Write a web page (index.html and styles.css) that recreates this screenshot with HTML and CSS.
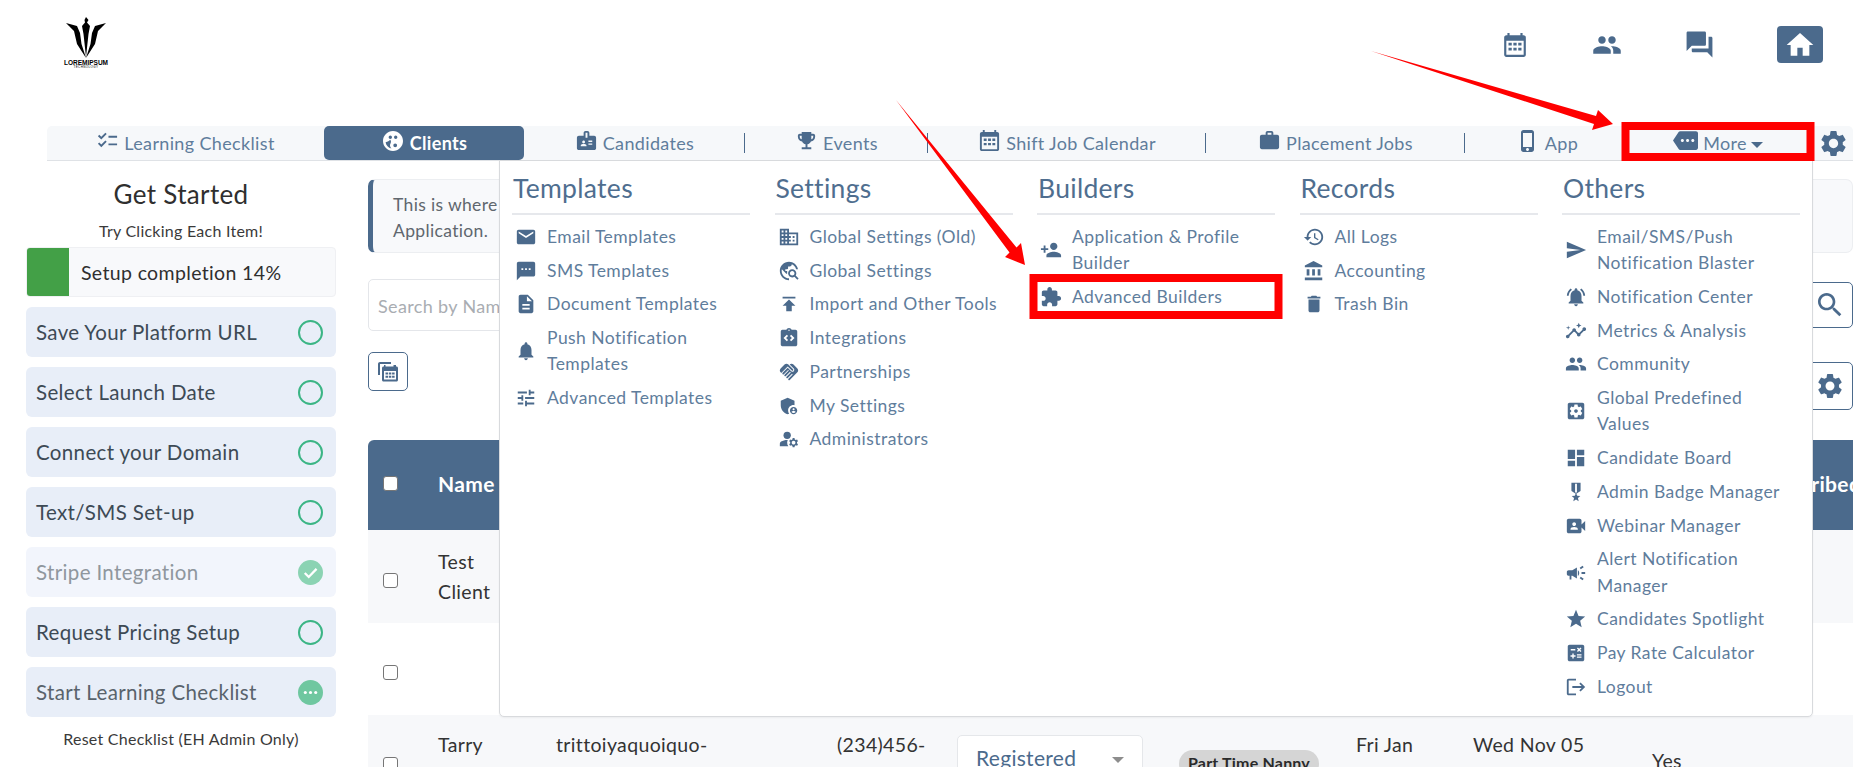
FILE: index.html
```html
<!DOCTYPE html>
<html lang="en">
<head>
<meta charset="utf-8">
<title>Clients</title>
<link rel="stylesheet" href="styles.css">
</head>
<body>
<div class="page">
<svg class="sprite" xmlns="http://www.w3.org/2000/svg">
<symbol id="i-cal" viewBox="0 0 24 24"><path d="M20 3h-1V1h-2v2H7V1H5v2H4c-1.1 0-2 .9-2 2v16c0 1.1.9 2 2 2h16c1.1 0 2-.9 2-2V5c0-1.1-.9-2-2-2zm0 18H4V8h16v13zM6 10h3v2.5H6zm4.5 0h3v2.5h-3zm4.5 0h3v2.5h-3zM6 14.5h3V17H6zm4.5 0h3V17h-3zm4.5 0h3V17h-3z"/></symbol>
<symbol id="i-people" viewBox="0 0 24 24"><path d="M16 11c1.66 0 2.99-1.34 2.99-3S17.66 5 16 5c-1.66 0-3 1.34-3 3s1.34 3 3 3zm-8 0c1.66 0 2.99-1.34 2.99-3S9.66 5 8 5C6.34 5 5 6.34 5 8s1.34 3 3 3zm0 2c-2.33 0-7 1.17-7 3.5V19h14v-2.5c0-2.33-4.67-3.5-7-3.5zm8 0c-.29 0-.62.02-.97.05 1.16.84 1.97 1.97 1.97 3.45V19h6v-2.5c0-2.33-4.67-3.5-7-3.5z"/></symbol>
<symbol id="i-forum" viewBox="0 0 24 24"><path d="M21 6h-2v9H6v2c0 .55.45 1 1 1h11l4 4V7c0-.55-.45-1-1-1zm-4 6V3c0-.55-.45-1-1-1H3c-.55 0-1 .45-1 1v14l4-4h10c.55 0 1-.45 1-1z"/></symbol>
<symbol id="i-home" viewBox="0 0 24 24"><path d="M10 20v-6h4v6h5v-8h3L12 3 2 12h3v8z"/></symbol>
<symbol id="i-check" viewBox="0 0 24 24"><path d="M22 7h-9v2h9V7zm0 8h-9v2h9v-2zM5.54 11L2 7.46l1.41-1.41 2.12 2.12 4.24-4.24 1.41 1.41L5.54 11zm0 8L2 15.46l1.41-1.41 2.12 2.12 4.24-4.24 1.41 1.41L5.54 19z"/></symbol>
<symbol id="i-face" viewBox="0 0 24 24"><path fill-rule="evenodd" d="M12 2C6.48 2 2 6.48 2 12s4.48 10 10 10 10-4.48 10-10S17.52 2 12 2zM9.300 6.600a1.700 1.700 0 1 1 0 3.400 1.700 1.700 0 0 1 0-3.400zm5.400 0a1.700 1.700 0 1 1 0 3.400 1.700 1.700 0 0 1 0-3.400zM4.600 13.200c2.200-.5 3.600-1.300 4.600-2.400.9 1 1.100 2.500.2 3.900-.8 1.200-.4 3.300 1 4.700-3-.5-5.400-3-5.800-6.200zm9.600 1.200a1.900 1.900 0 1 1 0 3.800 1.900 1.900 0 0 1 0-3.800z"/></symbol>
<symbol id="i-badge" viewBox="0 0 24 24"><path d="M20 7h-5V4c0-1.1-.9-2-2-2h-2c-1.1 0-2 .9-2 2v3H4c-1.1 0-2 .9-2 2v11c0 1.1.9 2 2 2h16c1.1 0 2-.9 2-2V9c0-1.1-.9-2-2-2zM9 12c.83 0 1.5.67 1.5 1.5S9.83 15 9 15s-1.5-.67-1.5-1.5S8.17 12 9 12zm3 6H6v-.75c0-1 2-1.5 3-1.5s3 .5 3 1.5V18zm1-9h-2V4h2v5zm5 7.5h-4V15h4v1.5zm0-3h-4V12h4v1.5z"/></symbol>
<symbol id="i-trophy" viewBox="0 0 24 24"><path d="M19 5h-2V3H7v2H5c-1.1 0-2 .9-2 2v1c0 2.55 1.92 4.63 4.39 4.94.63 1.5 1.98 2.63 3.61 2.96V19H7v2h10v-2h-4v-3.1c1.63-.33 2.98-1.46 3.61-2.96C19.08 12.63 21 10.55 21 8V7c0-1.1-.9-2-2-2zM5 8V7h2v3.82C5.84 10.4 5 9.3 5 8zm14 0c0 1.3-.84 2.4-2 2.82V7h2v1z"/></symbol>
<symbol id="i-work" viewBox="0 0 24 24"><path d="M20 6h-4V4c0-1.11-.89-2-2-2h-4c-1.11 0-2 .89-2 2v2H4c-1.11 0-1.99.89-1.99 2L2 19c0 1.11.89 2 2 2h16c1.11 0 2-.89 2-2V8c0-1.11-.89-2-2-2zm-6 0h-4V4h4v2z"/></symbol>
<symbol id="i-phone" viewBox="0 0 24 24"><path d="M15.5 1h-8C6.12 1 5 2.12 5 3.5v17C5 21.88 6.12 23 7.5 23h8c1.38 0 2.5-1.12 2.5-2.5v-17C18 2.12 16.88 1 15.5 1zm-4 21c-.83 0-1.5-.67-1.5-1.5s.67-1.5 1.5-1.5 1.5.67 1.5 1.5-.67 1.5-1.5 1.5zm4.5-4H7V4h9v14z"/></symbol>
<symbol id="i-more" viewBox="0 0 24 24"><path d="M22 3H7c-.69 0-1.23.35-1.59.88L0 12l5.41 8.11c.36.53.9.89 1.59.89h15c1.1 0 2-.9 2-2V5c0-1.1-.9-2-2-2zM9 13.5c-.83 0-1.5-.67-1.5-1.5s.67-1.5 1.5-1.5 1.5.67 1.5 1.5-.67 1.5-1.5 1.5zm5 0c-.83 0-1.5-.67-1.5-1.5s.67-1.5 1.5-1.5 1.5.67 1.5 1.5-.67 1.5-1.5 1.5zm5 0c-.83 0-1.5-.67-1.5-1.5s.67-1.5 1.5-1.5 1.5.67 1.5 1.5-.67 1.5-1.5 1.5z"/></symbol>
<symbol id="i-gear" viewBox="0 0 24 24"><path d="M19.14 12.94c.04-.3.06-.61.06-.94 0-.32-.02-.64-.07-.94l2.03-1.58c.18-.14.23-.41.12-.61l-1.92-3.32c-.12-.22-.37-.29-.59-.22l-2.39.96c-.5-.38-1.03-.7-1.62-.94l-.36-2.54c-.04-.24-.24-.41-.48-.41h-3.84c-.24 0-.43.17-.47.41l-.36 2.54c-.59.24-1.13.57-1.62.94l-2.39-.96c-.22-.08-.47 0-.59.22L2.74 8.87c-.12.21-.08.47.12.61l2.03 1.58c-.05.3-.09.63-.09.94s.02.64.07.94l-2.03 1.58c-.18.14-.23.41-.12.61l1.92 3.32c.12.22.37.29.59.22l2.39-.96c.5.38 1.03.7 1.62.94l.36 2.54c.05.24.24.41.48.41h3.84c.24 0 .44-.17.47-.41l.36-2.54c.59-.24 1.13-.56 1.62-.94l2.39.96c.22.08.47 0 .59-.22l1.92-3.32c.12-.22.07-.47-.12-.61l-2.01-1.58zM12 15.6c-1.98 0-3.6-1.62-3.6-3.6s1.62-3.6 3.6-3.6 3.6 1.62 3.6 3.6-1.62 3.6-3.6 3.6z"/></symbol>
<symbol id="i-email" viewBox="0 0 24 24"><path d="M20 4H4c-1.1 0-1.99.9-1.99 2L2 18c0 1.1.9 2 2 2h16c1.1 0 2-.9 2-2V6c0-1.1-.9-2-2-2zm0 4l-8 5-8-5V6l8 5 8-5v2z"/></symbol>
<symbol id="i-sms" viewBox="0 0 24 24"><path d="M20 2H4c-1.1 0-1.99.9-1.99 2L2 22l4-4h14c1.1 0 2-.9 2-2V4c0-1.1-.9-2-2-2zM9 11H7V9h2v2zm4 0h-2V9h2v2zm4 0h-2V9h2v2z"/></symbol>
<symbol id="i-doc" viewBox="0 0 24 24"><path d="M14 2H6c-1.1 0-1.99.9-1.99 2L4 20c0 1.1.89 2 1.99 2H18c1.1 0 2-.9 2-2V8l-6-6zm2 16H8v-2h8v2zm0-4H8v-2h8v2zm-3-5V3.5L18.5 9H13z"/></symbol>
<symbol id="i-bell" viewBox="0 0 24 24"><path d="M12 22c1.1 0 2-.9 2-2h-4c0 1.1.89 2 2 2zm6-6v-5c0-3.07-1.64-5.64-4.5-6.32V4c0-.83-.67-1.5-1.5-1.5s-1.5.67-1.5 1.5v.68C7.63 5.36 6 7.92 6 11v5l-2 2v1h16v-1l-2-2z"/></symbol>
<symbol id="i-tune" viewBox="0 0 24 24"><path d="M3 17v2h6v-2H3zM3 5v2h10V5H3zm10 16v-2h8v-2h-8v-2h-2v6h2zM7 9v2H3v2h4v2h2V9H7zm14 4v-2H11v2h10zm-6-4h2V7h4V5h-4V3h-2v6z"/></symbol>
<symbol id="i-domain" viewBox="0 0 24 24"><path d="M12 7V3H2v18h20V7H12zM6 19H4v-2h2v2zm0-4H4v-2h2v2zm0-4H4V9h2v2zm0-4H4V5h2v2zm4 12H8v-2h2v2zm0-4H8v-2h2v2zm0-4H8V9h2v2zm0-4H8V5h2v2zm10 12h-8v-2h2v-2h-2v-2h2v-2h-2V9h8v10zm-2-8h-2v2h2v-2zm0 4h-2v2h2v-2z"/></symbol>
<symbol id="i-explore" viewBox="0 0 24 24"><path d="M19.3 16.9c.4-.7.7-1.5.7-2.4 0-2.5-2-4.5-4.5-4.5S11 12 11 14.5s2 4.5 4.5 4.5c.9 0 1.7-.3 2.4-.7l3.2 3.2 1.4-1.4-3.2-3.2zm-3.8.1c-1.4 0-2.5-1.1-2.5-2.5s1.1-2.5 2.5-2.5 2.5 1.1 2.5 2.5-1.1 2.5-2.5 2.5zM12 20v2C6.48 22 2 17.52 2 12S6.48 2 12 2c4.84 0 8.87 3.44 9.8 8h-2.07c-.64-2.46-2.4-4.47-4.73-5.41V5c0 1.1-.9 2-2 2h-2v2c0 .55-.45 1-1 1H8v2h2v3H9l-4.79-4.79C4.08 10.79 4 11.38 4 12c0 4.41 3.59 8 8 8z"/></symbol>
<symbol id="i-publish" viewBox="0 0 24 24"><path d="M5 4v2h14V4H5zm0 10h4v6h6v-6h4l-7-7-7 7z"/></symbol>
<symbol id="i-integ" viewBox="0 0 24 24"><path d="M19 3h-4.18C14.4 1.84 13.3 1 12 1c-1.3 0-2.4.84-2.82 2H5c-.14 0-.27.01-.4.04-.39.08-.74.28-1.01.55-.18.18-.33.4-.43.64-.1.23-.16.49-.16.77v14c0 .27.06.54.16.78s.25.45.43.64c.27.27.62.47 1.01.55.13.02.26.03.4.03h14c1.1 0 2-.9 2-2V5c0-1.1-.9-2-2-2zM11 14.17l-1.41 1.42L6 12l3.59-3.59L11 9.83 8.83 12 11 14.17zm1-9.92c-.41 0-.75-.34-.75-.75s.34-.75.75-.75.75.34.75.75-.34.75-.75.75zm2.41 11.34L13 14.17 15.17 12 13 9.83l1.41-1.42L18 12l-3.59 3.59z"/></symbol>
<symbol id="i-hand" viewBox="0 0 24 24"><path d="M16.48 10.41c-.39.39-1.04.39-1.43 0l-4.47-4.46-7.05 7.04-.66-.63c-1.17-1.17-1.17-3.07 0-4.24l4.24-4.24c1.17-1.17 3.07-1.17 4.24 0L16.48 9c.39.39.39 1.02 0 1.41zm.7-2.12c.78.78.78 2.05 0 2.83-1.27 1.27-2.61.22-2.83 0l-3.76-3.76-5.57 5.57c-.39.39-.39 1.02 0 1.41.39.39 1.02.39 1.42 0l4.62-4.62.71.71-4.62 4.62c-.39.39-.39 1.02 0 1.41.39.39 1.02.39 1.42 0l4.62-4.62.71.71-4.62 4.62c-.39.39-.39 1.02 0 1.41.39.39 1.02.39 1.41 0l4.62-4.62.71.71-4.62 4.62c-.39.39-.39 1.02 0 1.41.39.39 1.02.39 1.41 0l8.32-8.34c1.17-1.17 1.17-3.07 0-4.24l-4.24-4.24c-1.15-1.15-3.01-1.17-4.18-.06l4.48 4.47z"/></symbol>
<symbol id="i-shield" viewBox="0 0 24 24"><path d="M17 11c.34 0 .67.04 1 .09V6.27L10.5 3 3 6.27v4.91c0 4.54 3.2 8.79 7.5 9.82.55-.13 1.08-.32 1.6-.55-.69-.98-1.1-2.17-1.1-3.45 0-3.31 2.69-6 6-6z"/><path d="M17 13c-2.21 0-4 1.79-4 4s1.79 4 4 4 4-1.79 4-4-1.79-4-4-4zm0 1.38c.62 0 1.12.51 1.12 1.12s-.51 1.12-1.12 1.12-1.12-.51-1.12-1.12.5-1.12 1.12-1.12zm0 5.37c-.93 0-1.74-.46-2.24-1.17.05-.72 1.51-1.08 2.24-1.08s2.19.36 2.24 1.08c-.5.71-1.31 1.17-2.24 1.17z"/></symbol>
<symbol id="i-manage" viewBox="0 0 24 24"><circle cx="10" cy="8" r="4"/><path d="M10.67 13.02c-.22-.01-.44-.02-.67-.02-2.42 0-4.68.67-6.61 1.82-.88.52-1.39 1.5-1.39 2.53V20h9.26c-.79-1.13-1.26-2.51-1.26-4 0-1.07.25-2.07.67-2.98z"/><path d="M20.75 16c0-.22-.03-.42-.06-.63l1.14-1.01-1-1.73-1.45.49c-.32-.27-.68-.48-1.08-.63L18 11h-2l-.3 1.49c-.4.15-.76.36-1.08.63l-1.45-.49-1 1.73 1.14 1.01c-.03.21-.06.41-.06.63s.03.42.06.63l-1.14 1.01 1 1.73 1.45-.49c.32.27.68.48 1.08.63L16 21h2l.3-1.49c.4-.15.76-.36 1.08-.63l1.45.49 1-1.73-1.14-1.01c.03-.21.06-.41.06-.63zM17 18c-1.1 0-2-.9-2-2s.9-2 2-2 2 .9 2 2-.9 2-2 2z"/></symbol>
<symbol id="i-padd" viewBox="0 0 24 24"><path d="M15 12c2.21 0 4-1.79 4-4s-1.79-4-4-4-4 1.79-4 4 1.79 4 4 4zm-9-2V7H4v3H1v2h3v3h2v-3h3v-2H6zm9 4c-2.67 0-8 1.34-8 4v2h16v-2c0-2.66-5.33-4-8-4z"/></symbol>
<symbol id="i-ext" viewBox="0 0 24 24"><path d="M20.5 11H19V7c0-1.1-.9-2-2-2h-4V3.5C13 2.12 11.88 1 10.5 1S8 2.12 8 3.5V5H4c-1.1 0-1.99.9-1.99 2v3.8H3.5c1.49 0 2.7 1.21 2.7 2.7s-1.21 2.7-2.7 2.7H2V20c0 1.1.9 2 2 2h3.8v-1.5c0-1.49 1.21-2.7 2.7-2.7 1.49 0 2.7 1.21 2.7 2.7V22H17c1.1 0 2-.9 2-2v-4h1.5c1.38 0 2.5-1.12 2.5-2.5S21.88 11 20.5 11z"/></symbol>
<symbol id="i-history" viewBox="0 0 24 24"><path d="M13 3c-4.97 0-9 4.03-9 9H1l3.89 3.89.07.14L9 12H6c0-3.87 3.13-7 7-7s7 3.13 7 7-3.13 7-7 7c-1.93 0-3.68-.79-4.94-2.06l-1.42 1.42C8.27 19.99 10.51 21 13 21c4.97 0 9-4.03 9-9s-4.03-9-9-9zm-1 5v5l4.28 2.54.72-1.21-3.5-2.08V8H12z"/></symbol>
<symbol id="i-bank" viewBox="0 0 24 24"><path d="M4 10v7h3v-7H4zm6 0v7h3v-7h-3zM2 22h19v-3H2v3zm14-12v7h3v-7h-3zm-4.5-9L2 6v2h19V6l-9.5-5z"/></symbol>
<symbol id="i-trash" viewBox="0 0 24 24"><path d="M6 19c0 1.1.9 2 2 2h8c1.1 0 2-.9 2-2V7H6v12zM19 4h-3.5l-1-1h-5l-1 1H5v2h14V4z"/></symbol>
<symbol id="i-send" viewBox="0 0 24 24"><path d="M2.01 21L23 12 2.01 3 2 10l15 2-15 2z"/></symbol>
<symbol id="i-bella" viewBox="0 0 24 24"><path d="M7.58 4.08L6.15 2.65C3.75 4.48 2.17 7.3 2.03 10.5h2c.15-2.65 1.51-4.97 3.55-6.42zm12.39 6.42h2c-.15-3.2-1.73-6.02-4.12-7.85l-1.42 1.43c2.02 1.45 3.39 3.77 3.54 6.42zM18 11c0-3.07-1.64-5.64-4.5-6.32V4c0-.83-.67-1.5-1.5-1.5s-1.5.67-1.5 1.5v.68C7.63 5.36 6 7.92 6 11v5l-2 2v1h16v-1l-2-2v-5zm-6 11c.14 0 .27-.01.4-.04.65-.14 1.18-.58 1.44-1.18.1-.24.15-.5.15-.78h-4c.01 1.1.9 2 2.01 2z"/></symbol>
<symbol id="i-insights" viewBox="0 0 24 24"><path d="M21 8c-1.45 0-2.26 1.44-1.93 2.51l-3.55 3.56c-.3-.09-.74-.09-1.04 0l-2.55-2.55C12.27 10.45 11.46 9 10 9c-1.45 0-2.27 1.44-1.93 2.52l-4.56 4.55C2.44 15.74 1 16.55 1 18c0 1.1.9 2 2 2 1.45 0 2.26-1.44 1.93-2.51l4.55-4.56c.3.09.74.09 1.04 0l2.55 2.55C12.73 16.55 13.54 18 15 18c1.45 0 2.27-1.44 1.93-2.52l3.56-3.55c1.07.33 2.51-.48 2.51-1.93 0-1.1-.9-2-2-2z"/><path d="M15 9l.94-2.07L18 6l-2.06-.93L15 3l-.92 2.07L12 6l2.08.93zM3.5 11L4 9l2-.5L4 8l-.5-2L3 8l-2 .5L3 9z"/></symbol>
<symbol id="i-sapps" viewBox="0 0 24 24"><path d="M12 10c-1.1 0-2 .9-2 2s.9 2 2 2 2-.9 2-2-.9-2-2-2zm7-7H5c-1.11 0-2 .9-2 2v14c0 1.1.89 2 2 2h14c1.11 0 2-.9 2-2V5c0-1.1-.89-2-2-2zm-1.75 9c0 .23-.02.46-.05.68l1.48 1.16c.13.11.17.3.08.45l-1.4 2.42c-.09.15-.27.21-.43.15l-1.74-.7c-.36.28-.76.51-1.18.69l-.26 1.85c-.03.17-.18.3-.35.3h-2.8c-.17 0-.32-.13-.35-.29l-.26-1.85c-.43-.18-.82-.41-1.18-.69l-1.74.7c-.16.06-.34 0-.43-.15l-1.4-2.42c-.09-.15-.05-.34.08-.45l1.48-1.16c-.03-.23-.05-.46-.05-.69 0-.23.02-.46.05-.68l-1.48-1.16c-.13-.11-.17-.3-.08-.45l1.4-2.42c.09-.15.27-.21.43-.15l1.74.7c.36-.28.76-.51 1.18-.69l.26-1.85c.03-.17.18-.3.35-.3h2.8c.17 0 .32.13.35.29l.26 1.85c.43.18.82.41 1.18.69l1.74-.7c.16-.06.34 0 .43.15l1.4 2.42c.09.15.05.34-.08.45l-1.48 1.16c.03.23.05.46.05.69z"/></symbol>
<symbol id="i-dash" viewBox="0 0 24 24"><path d="M3 13h8V3H3v10zm0 8h8v-6H3v6zm10 0h8V11h-8v10zm0-18v6h8V3h-8z"/></symbol>
<symbol id="i-medal" viewBox="0 0 24 24"><path d="M17 10.43V2H7v8.43c0 .35.18.68.49.86l4.18 2.51-.99 2.34-3.41.29 2.59 2.24L9.07 22 12 20.23 14.93 22l-.78-3.33 2.59-2.24-3.41-.29-.99-2.34 4.18-2.51c.3-.18.48-.5.48-.86zm-4 1.8l-1 .6-1-.6V3h2v9.23z"/></symbol>
<symbol id="i-video" viewBox="0 0 24 24"><path d="M18 10.48V6c0-1.1-.9-2-2-2H4c-1.1 0-2 .9-2 2v12c0 1.1.9 2 2 2h12c1.1 0 2-.9 2-2v-4.48l4 3.98v-11l-4 3.98zM10 8c1.1 0 2 .9 2 2s-.9 2-2 2-2-.9-2-2 .9-2 2-2zm4 8H6v-.57c0-.81.48-1.53 1.22-1.85.85-.37 1.79-.58 2.78-.58.99 0 1.93.21 2.78.58.74.32 1.22 1.04 1.22 1.85V16z"/></symbol>
<symbol id="i-camp" viewBox="0 0 24 24"><path d="M18 11v2h4v-2h-4zm-2 6.61c.96.71 2.21 1.65 3.2 2.39.4-.53.8-1.07 1.2-1.6-.99-.74-2.24-1.68-3.2-2.4-.4.54-.8 1.08-1.2 1.61zM20.4 5.6c-.4-.53-.8-1.07-1.2-1.6-.99.74-2.24 1.68-3.2 2.4.4.53.8 1.07 1.2 1.6.96-.72 2.21-1.65 3.2-2.4zM4 9c-1.1 0-2 .9-2 2v2c0 1.1.9 2 2 2h1v4h2v-4h1l5 3V6L8 9H4zm11.5 3c0-1.33-.58-2.53-1.5-3.35v6.69c.92-.81 1.5-2.01 1.5-3.34z"/></symbol>
<symbol id="i-star" viewBox="0 0 24 24"><path d="M12 17.27L18.18 21l-1.64-7.03L22 9.24l-7.19-.61L12 2 9.19 8.63 2 9.24l5.46 4.73L5.82 21z"/></symbol>
<symbol id="i-calc" viewBox="0 0 24 24"><path d="M19 3H5c-1.1 0-2 .9-2 2v14c0 1.1.9 2 2 2h14c1.1 0 2-.9 2-2V5c0-1.1-.9-2-2-2zm-5.97 4.06L14.09 6l1.41 1.41L16.91 6l1.06 1.06-1.41 1.41 1.41 1.41-1.06 1.06-1.41-1.4-1.41 1.41-1.06-1.06 1.41-1.41-1.41-1.42zm-6.78.66h5v1.5h-5v-1.5zM11.5 16h-2v2H8v-2H6v-1.5h2v-2h1.5v2h2V16zm6.5 1.25h-5v-1.5h5v1.5zm0-2.5h-5v-1.5h5v1.5z"/></symbol>
<symbol id="i-logout" viewBox="0 0 24 24"><path d="M17 7l-1.41 1.41L18.17 11H8v2h10.17l-2.58 2.58L17 17l5-5zM4 5h8V3H4c-1.1 0-2 .9-2 2v14c0 1.1.9 2 2 2h8v-2H4V5z"/></symbol>
<symbol id="i-search" viewBox="0 0 24 24"><path d="M15.5 14h-.79l-.28-.27C15.41 12.59 16 11.11 16 9.5 16 5.91 13.09 3 9.5 3S3 5.91 3 9.5 5.91 16 9.5 16c1.61 0 3.09-.59 4.23-1.57l.27.28v.79l5 4.99L20.49 19l-4.99-5zm-6 0C7.01 14 5 11.99 5 9.5S7.01 5 9.5 5 14 7.01 14 9.5 11.99 14 9.5 14z"/></symbol>
<symbol id="i-copycal" viewBox="0 0 24 24"><path d="M2 4c0-1.1.9-2 2-2h11v2H4v11H2V4z"/><path d="M19 5h1v1.5h.5c.8 0 1.5.7 1.5 1.5v12c0 .8-.7 1.5-1.5 1.5h-13C6.700 21.500 6 20.800 6 20V8c0-.8.7-1.500 1.500-1.500H8V5h1.500v1.500h8V5zM8 11v8.500h12V11H8zm1.500 1.500h2.500v2H9.500zm3.300 0h2.500v2h-2.500zm3.300 0h2.500v2h-2.500zm-6.600 3.200h2.500v2H9.500zm3.300 0h2.500v2h-2.500zm3.300 0h2.500v2h-2.500z"/></symbol>
</svg>

<header class="top">
  <div class="logo">
    <svg class="logo-mark" viewBox="0 0 42 42" xmlns="http://www.w3.org/2000/svg"><path d="M21 0l2.500 3-1.500 2.500 3 3.500-1.500 8-2.500 23-2.500-23-1.500-8 3-3.500L19.500 3zM1 6l11 3 3 7 1.500 11 4.500 14-9-14-3-13-5-5zM41 6l-11 3-3 7-1.500 11L21 41l9-14 3-13 5-5z"/></svg>
    <span class="logo-name">LOREMIPSUM</span>
    <span class="logo-sub">TECHNOLOGY</span>
  </div>
  <div class="top-icons">
    <svg class="ic-top ic-26"><use href="#i-cal"/></svg>
    <svg class="ic-top ic-30"><use href="#i-people"/></svg>
    <svg class="ic-top ic-31"><use href="#i-forum"/></svg>
    <span class="home-btn"><svg class="ic-home"><use href="#i-home"/></svg></span>
  </div>
</header>

<nav class="nav">
  <a class="ni"><svg class="ic-nav"><use href="#i-check"/></svg>Learning Checklist</a>
  <a class="ni active"><svg class="ic-nav"><use href="#i-face"/></svg>Clients</a>
  <a class="ni sep"><svg class="ic-nav"><use href="#i-badge"/></svg>Candidates</a>
  <a class="ni sep"><svg class="ic-nav"><use href="#i-trophy"/></svg>Events</a>
  <a class="ni sep"><svg class="ic-nav"><use href="#i-cal"/></svg>Shift Job Calendar</a>
  <a class="ni sep"><svg class="ic-nav"><use href="#i-work"/></svg>Placement Jobs</a>
  <a class="ni"><svg class="ic-nav ic-tall"><use href="#i-phone"/></svg>App</a>
  <a class="ni"><svg class="ic-nav ic-wide"><use href="#i-more"/></svg>More<span class="caret"></span></a>
  <a class="ni-gear"><svg class="ic-gear"><use href="#i-gear"/></svg></a>
</nav>

<div class="content">
  <aside class="side">
    <h2 class="side-title">Get Started</h2>
    <p class="side-sub">Try Clicking Each Item!</p>
    <div class="progress"><span class="progress-fill"></span><span class="progress-label">Setup completion 14%</span></div>
    <ul class="steps">
      <li class="step">Save Your Platform URL<span class="ring"></span></li>
      <li class="step">Select Launch Date<span class="ring"></span></li>
      <li class="step">Connect your Domain<span class="ring"></span></li>
      <li class="step">Text/SMS Set-up<span class="ring"></span></li>
      <li class="step done">Stripe Integration<svg class="state" viewBox="0 0 24 24"><circle cx="12" cy="12" r="12" fill="#8bd3b3"/><path d="M6.500 12.500l3.800 3.800 7.500-7.800" fill="none" stroke="#fff" stroke-width="2.200"/></svg></li>
      <li class="step">Request Pricing Setup<span class="ring"></span></li>
      <li class="step pending">Start Learning Checklist<svg class="state" viewBox="0 0 24 24"><circle cx="12" cy="12" r="12" fill="#6fc7a0"/><circle cx="7" cy="12" r="1.500" fill="#fff"/><circle cx="12" cy="12" r="1.500" fill="#fff"/><circle cx="17" cy="12" r="1.500" fill="#fff"/></svg></li>
    </ul>
    <p class="reset">Reset Checklist (EH Admin Only)</p>
  </aside>

  <main class="main">
    <div class="alert">This is where<br>Application.</div>
    <div class="search-row">
      <div class="search-input">Search by Name</div>
      <span class="icon-btn search-btn"><svg class="ic-search"><use href="#i-search"/></svg></span>
    </div>
    <div class="tool-row">
      <span class="icon-btn calc-btn"><svg class="ic-calc"><use href="#i-copycal"/></svg></span>
      <span class="icon-btn gear-btn"><svg class="ic-btn"><use href="#i-gear"/></svg></span>
    </div>
    <div class="table-wrap">
      <table class="grid">
        <colgroup><col class="c1"><col class="c2"><col class="c3"><col class="c4"><col class="c5"><col class="c6"><col class="c7"><col class="c8"><col class="c9"><col class="c10"></colgroup>
        <thead><tr>
          <th><span class="cb cb-head"></span></th><th class="th-label">Name</th><th></th><th></th><th></th><th></th><th></th><th></th><th></th><th class="th-label">Subscribed</th>
        </tr></thead>
        <tbody>
          <tr class="odd first"><td><span class="cb"></span></td><td class="t">Test<br>Client</td><td></td><td></td><td></td><td></td><td></td><td></td><td></td><td></td></tr>
          <tr><td><span class="cb"></span></td><td></td><td></td><td></td><td></td><td></td><td></td><td></td><td></td><td></td></tr>
          <tr class="odd">
            <td><span class="cb"></span></td><td class="t">Tarry</td><td class="t">trittoiyaquoiquo-</td><td class="t">(234)456-</td>
            <td class="cell-status"><div class="status">Registered<span class="status-arrow"></span></div></td>
            <td class="cell-tag"><span class="tag">Part Time Nanny</span></td>
            <td class="t">Fri Jan</td><td class="t">Wed Nov 05</td><td>Yes</td><td></td>
          </tr>
        </tbody>
      </table>
    </div>
  </main>
</div>

<section class="mega">
  <div class="mcol">
    <h3 class="mh">Templates</h3>
    <a class="mi"><svg class="mic"><use href="#i-email"/></svg><span>Email Templates</span></a>
    <a class="mi"><svg class="mic"><use href="#i-sms"/></svg><span>SMS Templates</span></a>
    <a class="mi"><svg class="mic"><use href="#i-doc"/></svg><span>Document Templates</span></a>
    <a class="mi"><svg class="mic"><use href="#i-bell"/></svg><span>Push Notification<br>Templates</span></a>
    <a class="mi"><svg class="mic"><use href="#i-tune"/></svg><span>Advanced Templates</span></a>
  </div>
  <div class="mcol">
    <h3 class="mh">Settings</h3>
    <a class="mi"><svg class="mic"><use href="#i-domain"/></svg><span>Global Settings (Old)</span></a>
    <a class="mi"><svg class="mic"><use href="#i-explore"/></svg><span>Global Settings</span></a>
    <a class="mi"><svg class="mic"><use href="#i-publish"/></svg><span>Import and Other Tools</span></a>
    <a class="mi"><svg class="mic"><use href="#i-integ"/></svg><span>Integrations</span></a>
    <a class="mi"><svg class="mic"><use href="#i-hand"/></svg><span>Partnerships</span></a>
    <a class="mi"><svg class="mic"><use href="#i-shield"/></svg><span>My Settings</span></a>
    <a class="mi"><svg class="mic"><use href="#i-manage"/></svg><span>Administrators</span></a>
  </div>
  <div class="mcol">
    <h3 class="mh">Builders</h3>
    <a class="mi"><svg class="mic"><use href="#i-padd"/></svg><span>Application &amp; Profile<br>Builder</span></a>
    <a class="mi"><svg class="mic"><use href="#i-ext"/></svg><span>Advanced Builders</span></a>
  </div>
  <div class="mcol">
    <h3 class="mh">Records</h3>
    <a class="mi"><svg class="mic"><use href="#i-history"/></svg><span>All Logs</span></a>
    <a class="mi"><svg class="mic"><use href="#i-bank"/></svg><span>Accounting</span></a>
    <a class="mi"><svg class="mic"><use href="#i-trash"/></svg><span>Trash Bin</span></a>
  </div>
  <div class="mcol">
    <h3 class="mh">Others</h3>
    <a class="mi"><svg class="mic"><use href="#i-send"/></svg><span>Email/SMS/Push<br>Notification Blaster</span></a>
    <a class="mi"><svg class="mic"><use href="#i-bella"/></svg><span>Notification Center</span></a>
    <a class="mi"><svg class="mic"><use href="#i-insights"/></svg><span>Metrics &amp; Analysis</span></a>
    <a class="mi"><svg class="mic"><use href="#i-people"/></svg><span>Community</span></a>
    <a class="mi"><svg class="mic"><use href="#i-sapps"/></svg><span>Global Predefined<br>Values</span></a>
    <a class="mi"><svg class="mic"><use href="#i-dash"/></svg><span>Candidate Board</span></a>
    <a class="mi"><svg class="mic"><use href="#i-medal"/></svg><span>Admin Badge Manager</span></a>
    <a class="mi"><svg class="mic"><use href="#i-video"/></svg><span>Webinar Manager</span></a>
    <a class="mi"><svg class="mic"><use href="#i-camp"/></svg><span>Alert Notification<br>Manager</span></a>
    <a class="mi"><svg class="mic"><use href="#i-star"/></svg><span>Candidates Spotlight</span></a>
    <a class="mi"><svg class="mic"><use href="#i-calc"/></svg><span>Pay Rate Calculator</span></a>
    <a class="mi"><svg class="mic"><use href="#i-logout"/></svg><span>Logout</span></a>
  </div>
</section>

<svg class="annot" viewBox="0 0 1872 767" xmlns="http://www.w3.org/2000/svg">
  <path class="a-fill" d="M1371 51L1596 116 1598 110 1613 124 1592 130 1594 124z"/>
  <path class="a-fill" d="M896 100L1016.500 247.500 1021 243 1025 265 1005 257 1009.500 252.500z"/>
  <path class="a-box" d="M1625.500 126h185v31h-185z"/>
  <path class="a-box" d="M1033.500 278h245v37h-245z"/>
</svg>
</div>
</body>
</html>
```

FILE: styles.css
```css
* { box-sizing: border-box; }
html, body { margin: 0; padding: 0; height: 767px; overflow: hidden; }
body {
  background: #fff;
  color: #3a3a3a;
  font-family: "Lato", "Open Sans", sans-serif;
  font-size: 20.500px;
  letter-spacing: .35px;
}
.page { position: relative; width: 1872px; height: 767px; overflow: hidden; }
.sprite { position: absolute; width: 0; height: 0; }
a { color: inherit; text-decoration: none; }
h2, h3, p, ul { margin: 0; padding: 0; font-weight: 400; }
ul { list-style: none; }
svg { fill: currentColor; }

/* header */
.top { height: 126px; display: flex; justify-content: space-between; padding: 17px 49px 0 64px; }
.logo { width: 44px; display: flex; flex-direction: column; align-items: center; color: #000; }
.logo-mark { width: 42px; height: 42px; display: block; }
.logo-name { font-family: "Liberation Sans", sans-serif; font-weight: 700; font-size: 6.500px; line-height: 6px; letter-spacing: 0; margin-top: 1px; }
.logo-sub { font-family: "Liberation Sans", sans-serif; font-size: 3px; line-height: 3px; letter-spacing: .4px; }
.top-icons { display: flex; align-items: center; height: 37px; margin-top: 9px; color: #4b6a8c; }
.ic-top { display: block; flex: none; }
.ic-26 { width: 26px; height: 26px; margin-right: 64px; }
.ic-30 { width: 30px; height: 30px; margin-right: 62px; }
.ic-31 { width: 31px; height: 31px; margin-right: 62px; }
.home-btn { width: 46px; height: 37px; border-radius: 4px; background: #4b6a8c; color: #fff; display: flex; align-items: center; justify-content: center; }
.ic-home { width: 32px; height: 32px; }

/* nav */
.nav {
  margin-left: 47px;
  width: 1806px;
  height: 35px;
  display: grid;
  grid-template-columns: 277px 200px 221px 183px 278px 259px 164px 178px 46px;
  background: #f6f8fa;
  border-bottom: 1px solid #dfe2e6;
  border-radius: 5px 5px 0 0;
  color: #5f7d9c;
  font-size: 18px;
}
.ni { position: relative; height: 34px; display: flex; align-items: center; justify-content: center; gap: 5px; }
.ni.sep::after { content: ""; position: absolute; right: 0; top: 7px; width: 1px; height: 20px; background: #4b6a8c; }
.ni.active { background: #4b6a8c; color: #fff; font-weight: 700; border-radius: 5px; height: 34px; }
.ic-nav { width: 23px; height: 23px; color: #4b6a8c; margin-top: -5px; flex: none; }
.ni.active .ic-nav { color: #fff; width: 24px; height: 24px; }
.ic-tall { width: 24px; height: 24px; }
.ic-wide { width: 25px; height: 25px; }
.caret { width: 0; height: 0; margin-left: -1px; border: 6px solid transparent; border-top: 6px solid #4b6a8c; border-bottom: 0; margin-top: 3px; }
.ni-gear { display: flex; align-items: center; justify-content: center; color: #4b6a8c; }
.ic-gear { width: 31px; height: 31px; margin-left: 6px; }

/* content */
.content { display: grid; grid-template-columns: 310px 1485px; column-gap: 32px; margin-left: 26px; }
.side-title { margin-top: 18px; font-size: 26px; line-height: 30px; text-align: center; color: #2f2f2f; }
.side-sub { margin-top: 11px; font-size: 16px; line-height: 22px; text-align: center; letter-spacing: .25px; }
.progress { margin-top: 5px; height: 50px; display: flex; align-items: center; background: #f8f9fb; border: 1px solid #eff0f3; border-radius: 4px; overflow: hidden; font-size: 19.500px; }
.progress-fill { width: 43px; height: 50px; background: #43a047; flex: none; margin-left: -1px; }
.progress-label { margin-left: 12px; color: #2f2f2f; }
.steps { margin-top: 10px; display: flex; flex-direction: column; gap: 10px; }
.step { height: 50px; display: flex; align-items: center; justify-content: space-between; padding: 0 13px 0 10px; border-radius: 6px; background: #e8eef8; color: #3d4a55; }
.step.done { background: #f2f5fc; color: #8f979e; }
.step.pending { color: #59636c; }
.ring { width: 25px; height: 25px; border-radius: 50%; border: 2.500px solid #3bb585; }
.state { width: 25px; height: 25px; }
.reset { margin-top: 12px; font-size: 16px; line-height: 20px; text-align: center; letter-spacing: .25px; }

.alert { margin-top: 18px; height: 74px; padding: 12px 20px; background: #f8f9fb; border: 1px solid #eceef1; border-left: 5px solid #4b6a8c; border-radius: 7px; color: #60676e; font-size: 17.500px; line-height: 26px; }
.search-row { margin-top: 26px; display: flex; align-items: center; height: 52px; }
.search-input { flex: 1; height: 52px; padding: 0 9px; line-height: 52px; border: 1px solid #e4e6ea; border-radius: 5px; color: #a9adb2; font-size: 18px; }
.icon-btn { display: flex; align-items: center; justify-content: center; border: 1.500px solid #4b6a8c; border-radius: 5px; color: #4b6a8c; background: #fff; }
.search-btn { width: 46px; height: 46px; margin-left: -1px; }
.tool-row { margin-top: 21px; display: flex; justify-content: space-between; align-items: flex-start; }
.calc-btn { width: 40px; height: 39px; }
.gear-btn { width: 46px; height: 48px; margin-top: 10px; }
.ic-btn { width: 30px; height: 30px; }
.ic-search { width: 32px; height: 32px; }
.ic-calc { width: 24px; height: 24px; }

.table-wrap { margin-top: 30px; width: 1485px; overflow: hidden; border-radius: 6px 0 0 0; }
.grid { width: 1485px; table-layout: fixed; border-collapse: collapse; font-size: 19.500px; line-height: 30px; color: #333; }
.c1 { width: 54px; } .c2 { width: 118px; } .c3 { width: 281px; } .c4 { width: 121px; } .c5 { width: 223px; }
.c6 { width: 175px; } .c7 { width: 117px; } .c8 { width: 179px; } .c9 { width: 103px; } .c10 { width: 114px; }
.grid th { height: 90px; padding: 0 16px; background: #4b6a8c; color: #fff; font-size: 21px; font-weight: 700; text-align: left; white-space: nowrap; overflow: hidden; }
.grid th.th-label { padding-bottom: 2px; }
.grid td { height: 92px; padding: 16px; vertical-align: middle; white-space: nowrap; }
.grid td.t { vertical-align: top; padding-top: 15px; }
.first td.t { padding-top: 17px; }
.odd td { background: #f7f8fa; }
.cb { display: block; width: 15px; height: 15px; border: 1.500px solid #767676; border-radius: 3px; background: #fff; }
.cb-head { margin-bottom: 4px; }
.grid td .cb { margin-top: 7px; }
.grid th:first-child, .grid td:first-child { padding: 0 0 0 15px; }
.grid td.cell-status { padding: 20px 0 0 15px; vertical-align: top; }
.grid td.cell-tag { padding: 35px 0 0 14px; vertical-align: top; }
.status { width: 186px; height: 50px; padding: 0 18px 4px; display: flex; align-items: center; justify-content: space-between; background: #fff; border: 1px solid #e5e7ea; border-radius: 5px; color: #4b6a8c; font-size: 21px; letter-spacing: .3px; }
.status-arrow { width: 0; height: 0; border: 6px solid transparent; border-top: 6px solid #8d8d8d; border-bottom: 0; margin-top: 4px; }
.tag { display: block; height: 28px; width: 140px; text-align: center; line-height: 26px; border-radius: 14px; background: #d5d5d5; color: #2a2a2a; font-size: 16px; font-weight: 700; letter-spacing: .2px; }

/* mega menu */
.mega {
  position: absolute;
  left: 499px;
  top: 160px;
  width: 1314px;
  height: 557px;
  padding: 12px 12px 0;
  display: grid;
  grid-template-columns: repeat(5, 238px);
  column-gap: 24.500px;
  background: #fff;
  border: 1px solid #d8dadd;
  border-radius: 0 0 5px 5px;
  box-shadow: 0 1px 2px rgba(0,0,0,.05);
  color: #5f7d9c;
  letter-spacing: .45px;
}
.mcol { display: block; }
.mh { height: 42px; margin-bottom: 5px; padding-left: 1px; border-bottom: 2px solid #e6e8ec; font-size: 26.500px; line-height: 30px; color: #4f6e8f; letter-spacing: .3px; }
.mi { display: flex; align-items: center; padding: 3.750px 0 3.750px 4px; font-size: 17.500px; line-height: 26.250px; }
.mi span { display: block; }
.mic { width: 22px; height: 22px; margin-left: -1px; margin-right: 10px; flex: none; color: #4b6a8c; }

/* annotations */
.annot { position: absolute; left: 0; top: 0; width: 1872px; height: 767px; pointer-events: none; }
.a-fill { fill: #ff0000; }
.a-box { fill: none; stroke: #ff0000; stroke-width: 8; }
```
